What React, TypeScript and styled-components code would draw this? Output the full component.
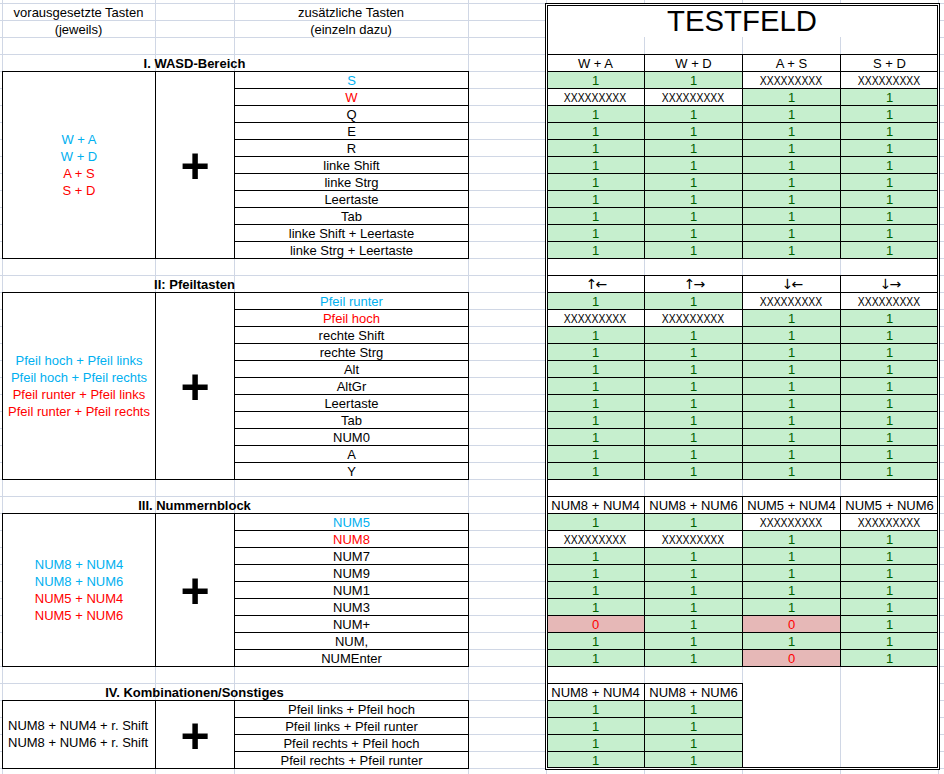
import React, { Fragment } from "react";
import styled, { createGlobalStyle, css } from "styled-components";

const GRID = "#d0d7e5";
const BLUE = "#00b0f0";
const RED = "#ff0000";
const GREEN_FILL = "#c6efce";
const GREEN_TEXT = "#006100";
const PINK_FILL = "#e6b8b7";

const X_LINES = [2, 155, 234, 468, 546, 644, 742, 840, 938];

const Global = createGlobalStyle`
  html, body { margin: 0; padding: 0; background: #fff; }
  body {
    font-family: "Liberation Sans", Arial, sans-serif;
    font-size: 13px;
    color: #000;
  }
`;

const bgImages = [
  ...X_LINES.map(() => `linear-gradient(${GRID}, ${GRID})`),
  `repeating-linear-gradient(to bottom, ${GRID} 0 1px, transparent 1px 17px)`,
].join(", ");
const bgPositions = [...X_LINES.map((x) => `${x}px 0`), "0 3px"].join(", ");
const bgSizes = [...X_LINES.map(() => "1px 100%"), "100% 100%"].join(", ");

const Sheet = styled.div`
  width: 944px;
  height: 774px;
  overflow: hidden;
  display: grid;
  grid-template-columns: 2px 153px 79px 234px 78px 98px 98px 98px 98px 1fr;
  grid-template-rows: 3px repeat(46, 17px);
  background-color: #fff;
  background-image: ${bgImages};
  background-position: ${bgPositions};
  background-size: ${bgSizes};
  background-repeat: no-repeat;
`;

type Place = { $row: number; $col: number; $rows?: number; $cols?: number };

const place = css<Place>`
  grid-row: ${(p) => p.$row + 2} / span ${(p) => p.$rows ?? 1};
  grid-column: ${(p) => p.$col + 2} / span ${(p) => p.$cols ?? 1};
  min-width: 0;
  white-space: nowrap;
`;

/* a cell with a thin black box, covering its own gridlines */
const boxed = css`
  margin: 0 -1px -1px 0;
  border: 1px solid #000;
`;

const Caption = styled.div<Place>`
  ${place};
  display: flex;
  justify-content: center;
  padding-top: 2px;
  line-height: 15px;
`;

const SectionTitle = styled.div<Place>`
  ${place};
  display: flex;
  justify-content: center;
  padding-top: 2px;
  line-height: 15px;
  font-weight: 700;
`;

const ComboCell = styled.div<Place & { $left?: boolean }>`
  ${place};
  ${boxed};
  background: #fff;
  display: flex;
  flex-direction: column;
  justify-content: center;
  align-items: ${(p) => (p.$left ? "flex-start" : "center")};
  padding-left: ${(p) => (p.$left ? "5px" : "0")};
  padding-bottom: 1px;
  line-height: 17px;
`;

const ComboLine = styled.span<{ $color: string }>`
  color: ${(p) => p.$color};
`;

const PlusCell = styled.div<Place>`
  ${place};
  ${boxed};
  background: #fff;
  display: flex;
  align-items: center;
  justify-content: center;
  font-size: 50px;
  font-weight: 700;
  line-height: 1;
  padding-top: 2px;
`;

const KeyCell = styled.div<Place & { $color: string }>`
  ${place};
  ${boxed};
  background: #fff;
  color: ${(p) => p.$color};
  display: flex;
  justify-content: center;
  padding-top: 1px;
  line-height: 15px;
`;

const Backdrop = styled.div<Place>`
  ${place};
  background-color: #fff;
  background-image: repeating-linear-gradient(90deg, ${GRID} 0 1px, transparent 1px 98px);
`;

const TitleCell = styled.div<Place>`
  ${place};
  background: #fff;
  display: flex;
  align-items: flex-end;
  justify-content: center;
  font-size: 29.3px;
  line-height: 29px;
  padding-bottom: 2px;
`;

const HeadCell = styled.div<Place>`
  ${place};
  ${boxed};
  background: #fff;
  display: flex;
  justify-content: center;
  padding-top: 1px;
  line-height: 15px;
`;

const Arrows = styled.span`
  font-family: "DejaVu Sans", sans-serif;
  font-size: 14px;
  letter-spacing: -2px;
  line-height: 15px;
`;

type Val = "1" | "0" | "X";

const VALUE_LOOK: Record<Val, { fill: string; color: string }> = {
  "1": { fill: GREEN_FILL, color: GREEN_TEXT },
  "0": { fill: PINK_FILL, color: RED },
  X: { fill: "#fff", color: "#000" },
};

const ValueCell = styled.div<Place & { $v: Val }>`
  ${place};
  ${boxed};
  background: ${(p) => VALUE_LOOK[p.$v].fill};
  color: ${(p) => VALUE_LOOK[p.$v].color};
  display: flex;
  justify-content: center;
  padding-top: 1px;
  line-height: 15px;
`;

const NarrowText = styled.span`
  display: inline-block;
  transform: scaleX(0.8);
  transform-origin: center;
`;

const TestfeldFrame = styled.div<Place>`
  ${place};
  margin: 0 -2px -2px -1px;
  border: 1px solid #000;
  box-shadow: inset 0 0 0 1px #fff, inset 0 0 0 2px #000;
  pointer-events: none;
  z-index: 2;
`;

type Txt = { t: string; c: string };
type SectionData = {
  row: number;
  title: string;
  combos: Txt[];
  comboLeft?: boolean;
  keys: Txt[];
  heads: string[];
  arrowHeads?: boolean;
  values: Val[][];
};

const b = (t: string): Txt => ({ t, c: BLUE });
const r = (t: string): Txt => ({ t, c: RED });
const k = (t: string): Txt => ({ t, c: "#000" });

const ones = (): Val[] => ["1", "1", "1", "1"];

const sections: SectionData[] = [
  {
    row: 3,
    title: "I. WASD-Bereich",
    combos: [b("W + A"), b("W + D"), r("A + S"), r("S + D")],
    keys: [
      b("S"),
      r("W"),
      k("Q"),
      k("E"),
      k("R"),
      k("linke Shift"),
      k("linke Strg"),
      k("Leertaste"),
      k("Tab"),
      k("linke Shift + Leertaste"),
      k("linke Strg + Leertaste"),
    ],
    heads: ["W + A", "W + D", "A + S", "S + D"],
    values: [
      ["1", "1", "X", "X"],
      ["X", "X", "1", "1"],
      ...Array.from({ length: 9 }, ones),
    ],
  },
  {
    row: 16,
    title: "II: Pfeiltasten",
    combos: [
      b("Pfeil hoch + Pfeil links"),
      b("Pfeil hoch + Pfeil rechts"),
      r("Pfeil runter + Pfeil links"),
      r("Pfeil runter + Pfeil rechts"),
    ],
    keys: [
      b("Pfeil runter"),
      r("Pfeil hoch"),
      k("rechte Shift"),
      k("rechte Strg"),
      k("Alt"),
      k("AltGr"),
      k("Leertaste"),
      k("Tab"),
      k("NUM0"),
      k("A"),
      k("Y"),
    ],
    heads: ["\u2191\u2190", "\u2191\u2192", "\u2193\u2190", "\u2193\u2192"],
    arrowHeads: true,
    values: [
      ["1", "1", "X", "X"],
      ["X", "X", "1", "1"],
      ...Array.from({ length: 9 }, ones),
    ],
  },
  {
    row: 29,
    title: "III. Nummernblock",
    combos: [b("NUM8 + NUM4"), b("NUM8 + NUM6"), r("NUM5 + NUM4"), r("NUM5 + NUM6")],
    keys: [
      b("NUM5"),
      r("NUM8"),
      k("NUM7"),
      k("NUM9"),
      k("NUM1"),
      k("NUM3"),
      k("NUM+"),
      k("NUM,"),
      k("NUMEnter"),
    ],
    heads: ["NUM8 + NUM4", "NUM8 + NUM6", "NUM5 + NUM4", "NUM5 + NUM6"],
    values: [
      ["1", "1", "X", "X"],
      ["X", "X", "1", "1"],
      ones(),
      ones(),
      ones(),
      ones(),
      ["0", "1", "0", "1"],
      ones(),
      ["1", "1", "0", "1"],
    ],
  },
  {
    row: 40,
    title: "IV. Kombinationen/Sonstiges",
    combos: [k("NUM8 + NUM4 + r. Shift"), k("NUM8 + NUM6 + r. Shift")],
    comboLeft: true,
    keys: [
      k("Pfeil links + Pfeil hoch"),
      k("Pfeil links + Pfeil runter"),
      k("Pfeil rechts + Pfeil hoch"),
      k("Pfeil rechts + Pfeil runter"),
    ],
    heads: ["NUM8 + NUM4", "NUM8 + NUM6"],
    values: [
      ["1", "1"],
      ["1", "1"],
      ["1", "1"],
      ["1", "1"],
    ],
  },
];

function Section({ s }: { s: SectionData }) {
  const first = s.row + 1;
  const n = s.keys.length;
  return (
    <Fragment>
      <SectionTitle $row={s.row} $col={1}>
        {s.title}
      </SectionTitle>
      <ComboCell $row={first} $col={0} $rows={n} $left={s.comboLeft}>
        {s.combos.map((c) => (
          <ComboLine key={c.t} $color={c.c}>
            {c.t}
          </ComboLine>
        ))}
      </ComboCell>
      <PlusCell $row={first} $col={1} $rows={n}>
        +
      </PlusCell>
      {s.keys.map((key, i) => (
        <KeyCell key={key.t + i} $row={first + i} $col={2} $color={key.c}>
          {key.t}
        </KeyCell>
      ))}
      {s.heads.map((h, i) => (
        <HeadCell key={h + i} $row={s.row} $col={4 + i}>
          {s.arrowHeads ? <Arrows>{h}</Arrows> : h}
        </HeadCell>
      ))}
      {s.values.map((row, ri) =>
        row.map((v, ci) => (
          <ValueCell key={`${ri}-${ci}`} $row={first + ri} $col={4 + ci} $v={v}>
            {v === "X" ? <NarrowText>XXXXXXXXX</NarrowText> : v}
          </ValueCell>
        ))
      )}
    </Fragment>
  );
}

export default function App() {
  return (
    <Sheet>
      <Global />
      <Caption $row={0} $col={0}>vorausgesetzte Tasten</Caption>
      <Caption $row={1} $col={0}>(jeweils)</Caption>
      <Caption $row={0} $col={2}>zusätzliche Tasten</Caption>
      <Caption $row={1} $col={2}>(einzeln dazu)</Caption>

      <Backdrop $row={0} $col={4} $rows={45} $cols={4} />
      <TitleCell $row={0} $col={4} $rows={2} $cols={4}>
        TESTFELD
      </TitleCell>

      {sections.map((s) => (
        <Section key={s.title} s={s} />
      ))}

      <TestfeldFrame $row={0} $col={4} $rows={45} $cols={4} />
    </Sheet>
  );
}
